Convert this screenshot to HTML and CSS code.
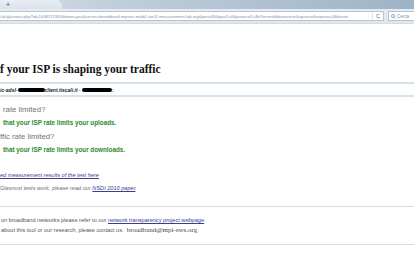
FILE: index.html
```html
<!DOCTYPE html>
<html>
  <head>
    <meta charset="UTF-8" />
    <title>Glasnost: Test if your ISP is shaping your traffic</title>
    <link rel="stylesheet" href="styles.css">
  </head>
  <body>
    <!-- Browser chrome -->
    <div class="chrome">
      <div class="tabstrip">
        <div class="tab-end"></div>
        <span class="newtab">+</span>
      </div>
      <div class="toolbar">
        <div class="urlbar">
          <span class="url">/ak/glasnost.php?id=1408211365&amp;done=yes&amp;server=broadband.mpisws.mlab1.tor01.measurement-lab.org&amp;port=80&amp;port2=0&amp;protocol1=BitTorrent&amp;down=true&amp;up=true&amp;repeats=3&amp;durati</span>
          <span class="reload">C</span>
        </div>
        <div class="search">
          <svg class="lens" width="5" height="5" viewBox="0 0 10 10"><circle cx="4" cy="4" r="3" fill="none" stroke="#7a838c" stroke-width="1.4"/><line x1="6.2" y1="6.2" x2="9" y2="9" stroke="#7a838c" stroke-width="1.6"/></svg>
          Cerca
        </div>
      </div>
    </div>

    <div class="page">
      <h1 class="title">f your ISP is shaping your traffic</h1>

      <div class="host-bar">
        <span class="host">ic-adsl-<span class="blot wide"></span>client.tiscali.it - <span class="blot"></span>:</span>
      </div>

      <div class="results">
        <p class="question">rate limited?</p>
        <p class="verdict">that your ISP rate limits your uploads.</p>
        <p class="question flush">ffic rate limited?</p>
        <p class="verdict">that your ISP rate limits your downloads.</p>
      </div>

      <div class="more">
        <p><a href="#">ed measurement results of the test here</a></p>
        <p class="note">Glasnost tests work, please read our <a href="#">NSDI 2010 paper</a>.</p>
      </div>

      <div class="footer">
        <p>on broadband networks please refer to our <a href="#">network transparency project webpage</a></p>
        <p class="second">about this tool or our research, please contact us:&nbsp; <span class="mail">broadband@mpi-sws.org</span></p>
      </div>
    </div>
  </body>
</html>
```

FILE: styles.css
```css
body {
  margin: 0;
  font-family: "Liberation Sans", Arial, sans-serif;
  background: #fff;
  overflow: hidden;
}

/* Browser chrome */
.chrome {
  height: 24px;
}
.tabstrip {
  height: 9px;
  display: flex;
  align-items: center;
  background: linear-gradient(to right, #d3dce5 0%, #bccbd8 35%, #aabdcd 75%, #9db3c6 100%);
  position: relative;
}
.tab-end {
  position: absolute;
  left: 0;
  top: 0;
  width: 62px;
  height: 9px;
  background: linear-gradient(to bottom, #e9eef3, #dbe3ea);
  border-top-right-radius: 6px;
}
.newtab {
  position: relative;
  margin-left: 6px;
  font-size: 7px;
  line-height: 9px;
  color: #3f4c59;
}
.toolbar {
  height: 15px;
  display: flex;
  align-items: center;
  gap: 4px;
  background: linear-gradient(to bottom, #e6ecf2, #dfe6ed);
  border-bottom: 1px solid #d4dce4;
  box-sizing: border-box;
}
.urlbar {
  flex: 1;
  min-width: 0;
  height: 10px;
  display: flex;
  align-items: center;
  background: #fff;
  border: 1px solid #b9c4cf;
  border-left: none;
  box-sizing: border-box;
}
.url {
  flex: 1;
  min-width: 0;
  overflow: hidden;
  white-space: nowrap;
  font-size: 4.2px;
  color: #8a8f96;
}
.reload {
  width: 10px;
  border-left: 1px solid #dde2e7;
  text-align: center;
  font-size: 5px;
  color: #555;
}
.search {
  width: 26px;
  height: 10px;
  display: flex;
  align-items: center;
  gap: 1px;
  background: #fff;
  border: 1px solid #b9c4cf;
  border-right: none;
  box-sizing: border-box;
  font-size: 4.5px;
  color: #8a8f96;
  padding-left: 2px;
}

/* Page content */
.page {
  padding-top: 39px;
}
.title {
  margin: 0;
  font-family: "Liberation Serif", "Times New Roman", serif;
  font-size: 11.5px;
  line-height: 12px;
  font-weight: bold;
  color: #111;
}
.host-bar {
  margin-top: 7px;
  height: 11px;
  border-top: 2px solid #d8e2e9;
  border-bottom: 2px solid #d8e2e9;
  display: flex;
  align-items: center;
}
.host {
  font-size: 5px;
  font-weight: bold;
  font-style: italic;
  color: #222;
}
.blot {
  display: inline-block;
  width: 30px;
  height: 4.5px;
  background: #000;
  border-radius: 2.5px;
  vertical-align: middle;
}
.blot.wide {
  width: 27px;
}

.results {
  padding-top: 8px;
}
.results p {
  margin: 0;
}
.results .question {
  padding-left: 3px;
  font-size: 7.8px;
  line-height: 10px;
  color: #737373;
}
.results .question.flush {
  padding-left: 0;
  margin-top: 5px;
}
.results .verdict {
  padding-left: 3px;
  margin-top: 4px;
  font-size: 6.3px;
  line-height: 8px;
  font-weight: bold;
  color: #2b8a2b;
}

.more {
  padding-top: 17px;
}
.more p {
  margin: 0 0 5px 0;
  font-size: 5.6px;
  line-height: 8px;
  font-style: italic;
  color: #6f6f6f;
}
.more a,
.footer a {
  color: #3b3b8f;
}

.footer {
  margin-top: 14px;
  padding-top: 9px;
  padding-bottom: 10px;
  border-top: 1px solid #d3dde5;
  border-bottom: 1px solid #d3dde5;
}
.footer p {
  margin: 0 0 0 1px;
  font-size: 5.6px;
  line-height: 8px;
  color: #555;
}
.footer .second {
  margin-top: 2px;
}
.mail {
  font-family: "Liberation Serif", "Times New Roman", serif;
  font-size: 7px;
  color: #444;
}
```
